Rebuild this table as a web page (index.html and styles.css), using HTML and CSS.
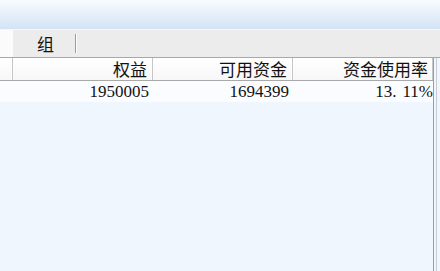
FILE: index.html
```html
<!DOCTYPE html>
<html>
<head>
<meta charset="utf-8">
<link rel="stylesheet" href="styles.css">
</head>
<body>
<div class="app">
  <div class="topbar"></div>
  <div class="tabs">
    <div class="tab tab-active"></div>
    <div class="tab tab-group">组</div>
  </div>
  <div class="panel">
    <div class="grid">
      <div class="row header">
        <div class="cell c0"></div>
        <div class="cell c1">权益</div>
        <div class="cell c2">可用资金</div>
        <div class="cell c3">资金使用率</div>
      </div>
      <div class="row data">
        <div class="cell c0"></div>
        <div class="cell c1 num">1950005</div>
        <div class="cell c2 num">1694399</div>
        <div class="cell c3 num">13.<span class="gap"></span>11%</div>
      </div>
      <div class="body"></div>
    </div>
    <div class="gutter"></div>
  </div>
</div>
</body>
</html>
```

FILE: styles.css
```css
html, body {
  margin: 0;
  padding: 0;
  width: 440px;
  height: 271px;
  overflow: hidden;
  background: #f0f6fe;
}
.app {
  display: flex;
  flex-direction: column;
  height: 271px;
  font-family: "Noto Sans CJK SC", "Liberation Sans", sans-serif;
}
.topbar {
  height: 29px;
  background: linear-gradient(#f8fbff, #e6eff9 50%, #d3e3f4);
}
.tabs {
  height: 27px;
  display: flex;
  background: #ececec;
  border-top: 1px solid #f6f6f6;
  border-bottom: 1px solid #a8a8a8;
}
.tab {
  height: 27px;
  box-sizing: border-box;
}
.tab-active {
  width: 13px;
  background: #fbfbfb;
  border-bottom: 1px solid #fbfbfb;
}
.tab-group {
  width: 63px;
  font-size: 17px;
  line-height: 27px;
  text-align: center;
  color: #111;
  position: relative;
  padding-left: 2px;
}
.tab-group::after {
  content: "";
  position: absolute;
  right: 0;
  top: 4px;
  bottom: 4px;
  width: 1px;
  background: #9a9a9a;
  box-shadow: 1px 0 0 #ffffff;
}
.panel {
  flex: 1;
  display: flex;
}
.grid {
  width: 433px;
  display: flex;
  flex-direction: column;
}
.row {
  display: flex;
}
.header {
  height: 22px;
  background: linear-gradient(#ffffff, #f7f7f7);
  border-bottom: 1px solid #a9a9a9;
}
.header .cell {
  border-right: 1px solid #c6c6c6;
  box-shadow: inset -1px 0 0 #ffffff;
  font-size: 17px;
  line-height: 22px;
  color: #111;
}
.cell {
  box-sizing: border-box;
  text-align: right;
  padding-right: 5px;
  white-space: nowrap;
}
.c0 { width: 13px; }
.c1 { width: 140px; }
.c2 { width: 140px; }
.c3 { width: 140px; padding-right: 0; }
.header .c3 { padding-right: 4px; }
.data {
  height: 21px;
  background: #fafcff;
}
.num {
  font-family: "Liberation Serif", "Noto Serif CJK SC", serif;
  font-size: 17px;
  line-height: 21px;
  color: #111;
}
.data .c1 { padding-right: 4px; }
.data .c2 { padding-right: 4px; }
.data .c3 { padding-right: 0; }
.gap {
  display: inline-block;
  width: 6px;
}
.body {
  flex: 1;
  background: #f0f6fe;
}
.gutter {
  flex: 1;
  border-left: 1px solid #9d9d9d;
  background: #f0f6fe;
  position: relative;
}
.gutter::after {
  content: "";
  position: absolute;
  left: 2px;
  top: 0;
  bottom: 0;
  width: 1px;
  background: #c8ccd2;
}
```
